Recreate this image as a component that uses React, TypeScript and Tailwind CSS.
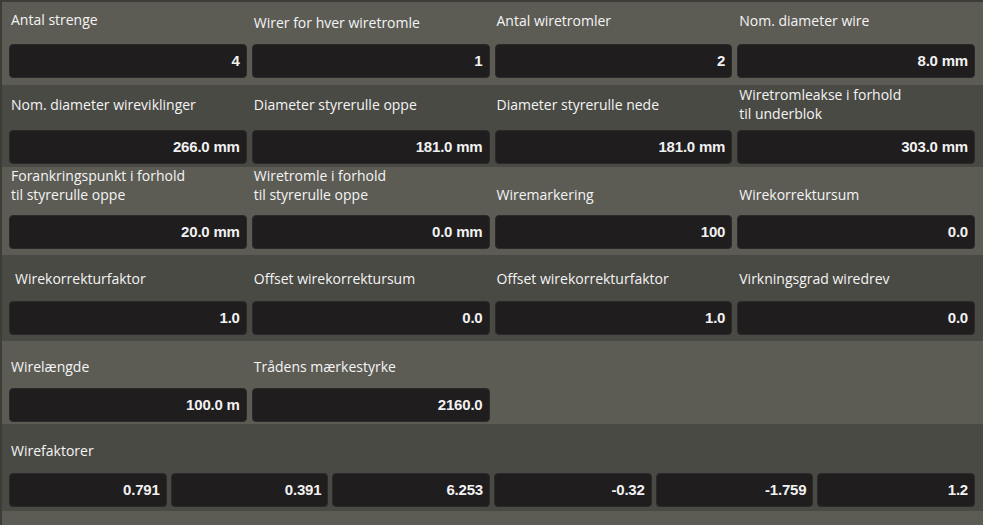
import React from "react";

type Field = { label: string[]; value: string; labelTop: number; labelLeft?: number };
type Row = { tone: "light" | "dark"; height: number; inputTop: number; fields: Field[] };

const rows: Row[] = [
  {
    tone: "light",
    height: 85,
    inputTop: 42,
    fields: [
      { label: ["Antal strenge"], value: "4", labelTop: 10 },
      { label: ["Wirer for hver wiretromle"], value: "1", labelTop: 13 },
      { label: ["Antal wiretromler"], value: "2", labelTop: 11 },
      { label: ["Nom. diameter wire"], value: "8.0 mm", labelTop: 11 },
    ],
  },
  {
    tone: "dark",
    height: 82,
    inputTop: 45,
    fields: [
      { label: ["Nom. diameter wireviklinger"], value: "266.0 mm", labelTop: 10 },
      { label: ["Diameter styrerulle oppe"], value: "181.0 mm", labelTop: 10 },
      { label: ["Diameter styrerulle nede"], value: "181.0 mm", labelTop: 10 },
      { label: ["Wiretromleakse i forhold", "til underblok"], value: "303.0 mm", labelTop: 0 },
    ],
  },
  {
    tone: "light",
    height: 88,
    inputTop: 48,
    fields: [
      { label: ["Forankringspunkt i forhold", "til styrerulle oppe"], value: "20.0 mm", labelTop: -1 },
      { label: ["Wiretromle i forhold", "til styrerulle oppe"], value: "0.0 mm", labelTop: -1 },
      { label: ["Wiremarkering"], value: "100", labelTop: 18 },
      { label: ["Wirekorrektursum"], value: "0.0", labelTop: 18 },
    ],
  },
  {
    tone: "dark",
    height: 86,
    inputTop: 46,
    fields: [
      { label: ["Wirekorrekturfaktor"], value: "1.0", labelTop: 14, labelLeft: 6 },
      { label: ["Offset wirekorrektursum"], value: "0.0", labelTop: 14 },
      { label: ["Offset wirekorrekturfaktor"], value: "1.0", labelTop: 14 },
      { label: ["Virkningsgrad wiredrev"], value: "0.0", labelTop: 14 },
    ],
  },
  {
    tone: "light",
    height: 83,
    inputTop: 47,
    fields: [
      { label: ["Wirelængde"], value: "100.0 m", labelTop: 16 },
      { label: ["Trådens mærkestyrke"], value: "2160.0", labelTop: 16 },
    ],
  },
];

const factors = ["0.791", "0.391", "6.253", "-0.32", "-1.759", "1.2"];

const labelFont = { fontFamily: '"Open Sans", "Noto Sans", sans-serif' };
const valueFont = { fontFamily: '"Liberation Sans", Arial, sans-serif' };

function ValueBox({ value }: { value: string }) {
  return (
    <div
      className="h-[34px] rounded-[4px] bg-[#1f1d1e] border border-[#2b292a] flex items-center justify-end pr-[6px] text-[15px] font-bold text-[#f1f1f1] tracking-[-0.2px]"
      style={valueFont}
    >
      {value}
    </div>
  );
}

function Label({ lines, top, left = 2 }: { lines: string[]; top: number; left?: number }) {
  return (
    <div
      className="relative text-[14px] leading-[19px] text-[#f4f4f4] whitespace-nowrap"
      style={{ ...labelFont, top, paddingLeft: left }}
    >
      {lines.map((l) => (
        <div key={l}>{l}</div>
      ))}
    </div>
  );
}

export default function App() {
  return (
    <div className="w-[983px] h-[525px] overflow-hidden bg-[#5c5c55] border-l-2 border-t-2 border-[#3d3d38] flex flex-col">
      {rows.map((row, i) => (
        <div
          key={i}
          className={`shrink-0 pl-[7px] pr-[8px] grid grid-cols-4 gap-x-[5px] ${
            row.tone === "light" ? "bg-[#5c5c55]" : "bg-[#4a4a44]"
          }`}
          style={{ height: i === 0 ? row.height - 2 : row.height }}
        >
          {row.fields.map((f) => (
            <div key={f.label[0]} className="flex flex-col">
              <div className="shrink-0" style={{ height: row.inputTop }}>
                <Label lines={f.label} top={i === 0 ? f.labelTop - 2 : f.labelTop} left={f.labelLeft} />
              </div>
              <ValueBox value={f.value} />
            </div>
          ))}
        </div>
      ))}
      {/* wire factor row: six equal boxes */}
      <div className="shrink-0 h-[87px] bg-[#4a4a44] pl-[7px] pr-[8px] flex flex-col">
        <div className="h-[49px] shrink-0">
          <Label lines={["Wirefaktorer"]} top={17} />
        </div>
        <div className="grid grid-cols-6 gap-x-[4px]">
          {factors.map((v) => (
            <ValueBox key={v} value={v} />
          ))}
        </div>
      </div>
      <div className="flex-1 bg-[#5c5c55]" />
    </div>
  );
}
